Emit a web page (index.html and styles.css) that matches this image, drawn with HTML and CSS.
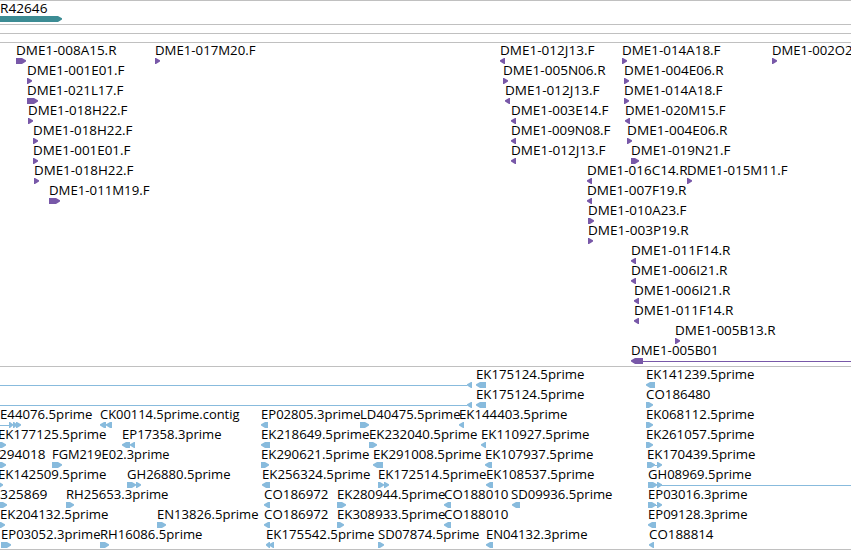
FILE: index.html
```
<!DOCTYPE html>
<html>

<head>
    <meta charset="utf-8">
    <title>Clone alignments</title>
    <link rel="stylesheet" href="styles.css">
</head>

<body>

    <div class="browser">
        <div class="track track-gene" id="gene"></div>
        <div class="track track-empty"></div>
        <div class="track track-empty"></div>
        <div class="track track-clones" id="clones"></div>
        <div class="track track-est" id="est"></div>
    </div>

    <script src="tracks.js"></script>

</body>

</html>
```
FILE: styles.css
```
body {
    margin: 0;
    background-color: #ffffff;
    color: #000000;
    overflow: hidden;
}

.browser {
    width: 851px;
    height: 550px;
    overflow: hidden;
    border-bottom: 1px solid #c0c0c0;
    box-sizing: border-box;
}

.track {
    box-sizing: border-box;
    border-top: 1px solid #c0c0c0;
    padding-top: 1px;
}

.track-gene {
    height: 24px;
}

.track-empty {
    height: 9px;
}

.track-clones {
    height: 324px;
}

.track-est {
    height: 183px;
}

.row {
    display: block;
    width: 851px;
    height: 20px;
    overflow: visible;
}

.label {
    font-family: "Open Sans", "Noto Sans", sans-serif;
    font-size: 12.5px;
    fill: #000000;
}

.track-gene .glyph {
    fill: #3c8c94;
}

.track-clones .glyph {
    fill: #7858a8;
}

.track-est .glyph {
    fill: #88bbdd;
}
```
FILE: tracks.js
```
// label: [text, start, end]
// glyph: [">", start, end] forward, ["<", start, end] reverse, ["-", start, end] line
var gene = [
    [["R42646", 0, 48, [">", -8, 62]]]
];

var clones = [
    [
        ["DME1-008A15.R", 16, 117, [">", 16, 26]],
        ["DME1-017M20.F", 155, 256, [">", 155, 160]],
        ["DME1-012J13.F", 500, 595, ["<", 500, 505]],
        ["DME1-014A18.F", 622, 721, [">", 622, 627]],
        ["DME1-002O2", 772, 853, [">", 772, 777]]
    ],
    [
        ["DME1-001E01.F", 27, 125, [">", 27, 32]],
        ["DME1-005N06.R", 503, 606, [">", 503, 508]],
        ["DME1-004E06.R", 624, 724, [">", 624, 629]]
    ],
    [
        ["DME1-021L17.F", 27, 124, [">", 27, 38]],
        ["DME1-012J13.F", 505, 600, ["<", 505, 510]],
        ["DME1-014A18.F", 624, 723, [">", 624, 629]]
    ],
    [
        ["DME1-018H22.F", 28, 128, [">", 28, 33]],
        ["DME1-003E14.F", 511, 609, ["<", 511, 516]],
        ["DME1-020M15.F", 625, 726, ["<", 625, 630]]
    ],
    [
        ["DME1-018H22.F", 33, 133, [">", 33, 38]],
        ["DME1-009N08.F", 511, 611, ["<", 511, 516]],
        ["DME1-004E06.R", 627, 728, [">", 627, 632]]
    ],
    [
        ["DME1-001E01.F", 33, 131, [">", 33, 38]],
        ["DME1-012J13.F", 511, 606, ["<", 511, 516]],
        ["DME1-019N21.F", 631, 731, [">", 631, 639]]
    ],
    [
        ["DME1-018H22.F", 34, 134, [">", 34, 39]],
        ["DME1-016C14.R", 587, 688, ["<", 587, 592]],
        ["DME1-015M11.F", 687, 788, [">", 687, 692]]
    ],
    [
        ["DME1-011M19.F", 49, 150, [">", 49, 60]],
        ["DME1-007F19.R", 587, 687, ["<", 587, 592]]
    ],
    [["DME1-010A23.F", 588, 687, [">", 588, 594]]],
    [["DME1-003P19.R", 588, 689, [">", 588, 593]]],
    [["DME1-011F14.R", 631, 731, ["<", 631, 636]]],
    [["DME1-006I21.R", 631, 728, ["<", 631, 636]]],
    [["DME1-006I21.R", 634, 731, ["<", 634, 639]]],
    [["DME1-011F14.R", 634, 734, ["<", 634, 639]]],
    [["DME1-005B13.R", 675, 776, [">", 675, 680]]],
    [["DME1-005B01", 631, 719, ["<", 631, 643], ["-", 643, 851]]]
];

var est = [
    [
        ["EK175124.5prime", 476, 585, ["-", 0, 467], ["<", 467, 472], ["<", 476, 486]],
        ["EK141239.5prime", 646, 755, ["<", 646, 655]]
    ],
    [
        ["EK175124.5prime", 476, 585, ["-", 0, 467], ["<", 467, 472], ["<", 476, 486]],
        ["CO186480", 646, 711, [">", 646, 653]]
    ],
    [
        ["E44076.5prime", 0, 93, ["-", 0, 9], [">", 9, 13], [">", 13, 17], [">", 16, 21]],
        ["CK00114.5prime.contig", 100, 240, ["<", 100, 106], ["<", 106, 112]],
        ["EP02805.3prime", 261, 361, ["<", 261, 268]],
        ["LD40475.5prime", 360, 461, [">", 360, 369]],
        ["EK144403.5prime", 459, 568, ["<", 459, 464]],
        ["EK068112.5prime", 646, 755, [">", 646, 653]]
    ],
    [
        ["EK177125.5prime", -2, 107, [">", -2, 6]],
        ["EP17358.3prime", 122, 222, ["<", 122, 130], ["<", 130, 135]],
        ["EK218649.5prime", 261, 370, ["<", 261, 270]],
        ["EK232040.5prime", 369, 478, [">", 369, 377]],
        ["EK110927.5prime", 481, 590, ["<", 481, 486]],
        ["EK261057.5prime", 646, 755, [">", 646, 653]]
    ],
    [
        ["294018", -1, 46, [">", -2, 6]],
        ["FGM219E02.3prime", 52, 170, [">", 52, 62]],
        ["EK290621.5prime", 261, 370, [">", 261, 269]],
        ["EK291008.5prime", 373, 482, ["<", 373, 383]],
        ["EK107937.5prime", 485, 594, ["<", 485, 492]],
        ["EK170439.5prime", 647, 756, [">", 647, 655], ["-", 655, 657], [">", 657, 662]]
    ],
    [
        ["EK142509.5prime", -2, 107, [">", -2, 3]],
        ["GH26880.5prime", 127, 231, [">", 127, 136], [">", 136, 141]],
        ["EK256324.5prime", 262, 371, ["<", 262, 270]],
        ["EK172514.5prime", 378, 487, [">", 378, 384], [">", 384, 389]],
        ["EK108537.5prime", 486, 595, ["<", 486, 493]],
        ["GH08969.5prime", 648, 752, [">", 648, 657], [">", 657, 662], ["-", 660, 851]]
    ],
    [
        ["325869", 0, 48, [">", -1, 7]],
        ["RH25653.3prime", 66, 169, [">", 66, 74]],
        ["CO186972", 264, 329, ["<", 264, 270]],
        ["EK280944.5prime", 337, 446, [">", 337, 346]],
        ["CO188010", 444, 509, ["<", 444, 451]],
        ["SD09936.5prime", 511, 613, ["<", 512, 520]],
        ["EP03016.3prime", 648, 748, [">", 648, 656], ["-", 655, 657], [">", 657, 662]]
    ],
    [
        ["EK204132.5prime", 0, 109, [">", -1, 5]],
        ["EN13826.5prime", 157, 259, [">", 157, 166]],
        ["CO186972", 264, 329, ["<", 264, 270]],
        ["EK308933.5prime", 337, 446, [">", 337, 344]],
        ["CO188010", 444, 509, ["<", 444, 451]],
        ["EP09128.3prime", 648, 748, ["<", 648, 656]]
    ],
    [
        ["EP03052.3prime", 1, 101, [">", 1, 11]],
        ["RH16086.5prime", 100, 203, [">", 100, 109]],
        ["EK175542.5prime", 266, 375, ["<", 266, 270], ["<", 269, 274]],
        ["SD07874.5prime", 378, 480, [">", 378, 384]],
        ["EN04132.3prime", 486, 588, ["<", 486, 493]],
        ["CO188814", 649, 714, ["<", 649, 654]]
    ]
];

function drawGlyph(glyph) {
    var type = glyph[0];
    var x1 = glyph[1];
    var x2 = glyph[2];

    if (type === "-") {
        return `<rect class="glyph" x="${x1}" y="17" width="${x2 - x1}" height="1"/>`;
    }

    // short features are only the arrow head
    var head = Math.min(x2 - x1 - 1, 4);
    var d;
    if (type === ">") {
        d = `M${x1} 14H${x2 - head}L${x2} 16.2V17.6L${x2 - head} 20H${x1}Z`;
    } else {
        d = `M${x2} 14H${x1 + head}L${x1} 16.2V17.6L${x1 + head} 20H${x2}Z`;
    }
    return `<path class="glyph" d="${d}"/>`;
}

function drawTrack(id, rows) {
    var html = "";
    rows.forEach(function(row) {
        html += '<svg class="row" viewBox="0 0 851 20">';
        row.forEach(function(feature) {
            var width = feature[2] - feature[1] - 0.5;
            html += feature.slice(3).map(drawGlyph).join("");
            html += `<text class="label" x="${feature[1]}" y="11" textLength="${width}" lengthAdjust="spacingAndGlyphs">${feature[0]}</text>`;
        });
        html += "</svg>";
    });
    document.getElementById(id).innerHTML = html;
}

drawTrack("gene", gene);
drawTrack("clones", clones);
drawTrack("est", est);
```
